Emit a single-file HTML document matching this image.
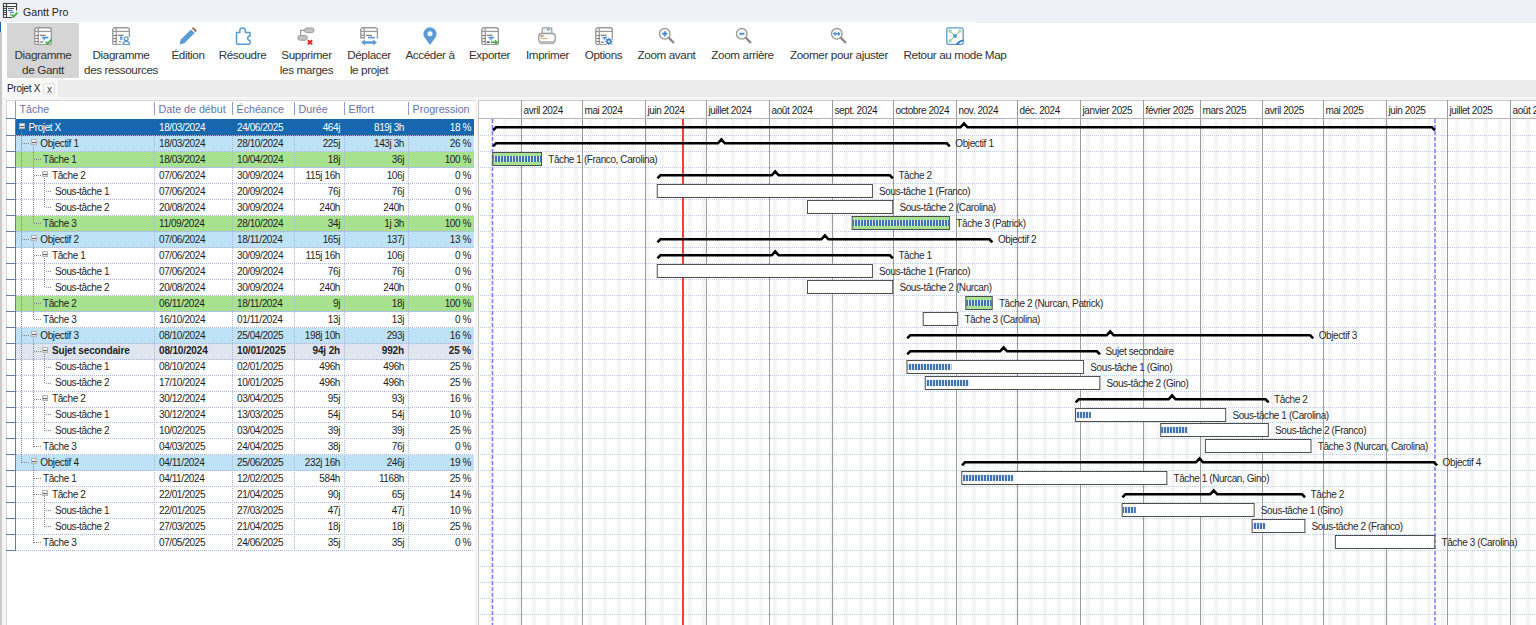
<!DOCTYPE html><html><head><meta charset="utf-8"><style>
*{box-sizing:border-box}
body{margin:0;width:1536px;height:625px;overflow:hidden;position:relative;background:#fff;font-family:"Liberation Sans", sans-serif;color:#1e1e1e}
.a{position:absolute}
.t{position:absolute;white-space:nowrap;font-size:10px;letter-spacing:-0.4px;line-height:16px}
.tb{position:absolute;white-space:nowrap;font-size:11.7px;letter-spacing:-0.38px;line-height:14.8px;text-align:center;color:#333}
.ic{position:absolute;width:18px;height:18px}
</style></head><body>
<div class="a" style="left:0;top:0;width:1536px;height:22px;background:#eff1f6"></div>
<svg class="a" style="left:0;top:0" width="20" height="20" viewBox="0 0 20 20">
<path d="M16.5 10.5 V3.5 H3.5 V17.5 H12" fill="#fff" stroke="#404040" stroke-width="1.1"/>
<rect x="3.5" y="3.5" width="13" height="3" fill="#fff" stroke="#404040" stroke-width="1.1"/>
<line x1="6.5" y1="3.5" x2="6.5" y2="17.5" stroke="#404040" stroke-width="1.1"/>
<path d="M4 8.5 H6.5 M4 10.5 H6.5 M4 12.5 H6.5 M4 14.5 H6.5" stroke="#404040" stroke-width="1"/>
<line x1="8" y1="8.5" x2="14" y2="8.5" stroke="#505050" stroke-width="1.1"/>
<line x1="8" y1="10.5" x2="12.5" y2="10.5" stroke="#3a78c8" stroke-width="1.1"/>
<line x1="10" y1="12.3" x2="14" y2="12.3" stroke="#3a78c8" stroke-width="1.1"/>
<line x1="10.3" y1="12.5" x2="10.3" y2="16" stroke="#909090" stroke-width="0.8"/>
<path d="M11.8 14.3 L13.6 16.6 L17.4 12.6" fill="none" stroke="#45b045" stroke-width="2"/>
</svg>
<div class="a" style="left:23px;top:4.7px;font-size:10.6px;line-height:14px;color:#1e1e1e;white-space:nowrap">Gantt Pro</div>
<div class="a" style="left:0;top:22px;width:1536px;height:58px;background:#fff"></div>
<div class="a" style="left:976px;top:22px;width:560px;height:1px;background:#eff1f6"></div>
<div class="a" style="left:0;top:22px;width:1px;height:10px;background:#1f5fa8"></div>
<div class="a" style="left:7px;top:23px;width:72px;height:55px;background:#d5d5d5"></div>
<svg class="ic" style="left:34px;top:27px" width="18" height="18" viewBox="0 0 18 18"><rect x="0.8" y="0.8" width="16.6" height="17.0" rx="2.2" fill="#fff" stroke="#9a9a9a" stroke-width="1.4"/><line x1="4.3" y1="0.8" x2="4.3" y2="17.8" stroke="#9a9a9a" stroke-width="1.3"/><line x1="0.8" y1="4.4" x2="17.4" y2="4.4" stroke="#9a9a9a" stroke-width="1.3"/><line x1="1.5" y1="8.5" x2="4.3" y2="8.5" stroke="#777" stroke-width="1.1"/><line x1="1.5" y1="11.5" x2="4.3" y2="11.5" stroke="#777" stroke-width="1.1"/><line x1="1.5" y1="14.5" x2="4.3" y2="14.5" stroke="#777" stroke-width="1.1"/><line x1="5.6" y1="8.3" x2="11.6" y2="8.3" stroke="#808080" stroke-width="1.3"/><line x1="8" y1="10.6" x2="14.5" y2="10.6" stroke="#4a90e2" stroke-width="1.7"/><line x1="10.3" y1="10.8" x2="10.3" y2="13.6" stroke="#4a90e2" stroke-width="1.3"/><line x1="5.6" y1="15" x2="9.5" y2="15" stroke="#808080" stroke-width="1.3"/><rect x="12" y="11" width="6" height="7" fill="#fff" opacity="0" /><path d="M11.8 14.6 L13.6 16.8 L17.6 12.3" fill="none" stroke="#3cb043" stroke-width="1.9"/></svg>
<div class="tb" style="left:-17.0px;top:48px;width:120px">Diagramme<br>de Gantt</div>
<svg class="ic" style="left:112px;top:27px" width="18" height="18" viewBox="0 0 18 18"><path d="M17.4 10 V2.8 A2 2 0 0 0 15.4 0.8 H2.8 A2 2 0 0 0 0.8 2.8 V15.8 A2 2 0 0 0 2.8 17.8 H9" fill="#fff" stroke="#9a9a9a" stroke-width="1.4"/><line x1="4.3" y1="0.8" x2="4.3" y2="17.8" stroke="#9a9a9a" stroke-width="1.3"/><line x1="0.8" y1="4.4" x2="17.4" y2="4.4" stroke="#9a9a9a" stroke-width="1.3"/><line x1="1.5" y1="8.5" x2="4.3" y2="8.5" stroke="#777" stroke-width="1.1"/><line x1="1.5" y1="11.5" x2="4.3" y2="11.5" stroke="#777" stroke-width="1.1"/><line x1="1.5" y1="14.5" x2="4.3" y2="14.5" stroke="#777" stroke-width="1.1"/><line x1="5.6" y1="8.3" x2="11.6" y2="8.3" stroke="#808080" stroke-width="1.3"/><path d="M8 10.3 H10.5 M8 12 H10.5" stroke="#4a90e2" stroke-width="1.4"/><line x1="7" y1="14.8" x2="9" y2="14.8" stroke="#808080" stroke-width="1.1"/><circle cx="14.2" cy="11.8" r="1.9" fill="#fff" stroke="#5b9bd5" stroke-width="1.3"/><path d="M10.8 17.6 Q11 14.4 14.2 14.4 Q17.4 14.4 17.6 17.6 Z" fill="#fff" stroke="#5b9bd5" stroke-width="1.3"/></svg>
<div class="tb" style="left:61.0px;top:48px;width:120px">Diagramme<br>des ressources</div>
<svg class="ic" style="left:179px;top:27px" width="18" height="18" viewBox="0 0 18 18"><path d="M0.6 17.4 L1.8 12.6 L12 2.4 L15.6 6 L5.4 16.2 Z" fill="#5b9bd5"/><path d="M12.8 1.6 L14.4 0 L18 3.6 L16.4 5.2 Z" fill="#a27a5a"/></svg>
<div class="tb" style="left:128.0px;top:48px;width:120px">Édition</div>
<svg class="ic" style="left:235px;top:27px" width="18" height="18" viewBox="0 0 18 18"><path d="M1.5 5.5 H4.8 V3.8 A2.8 2.8 0 0 1 10.4 3.8 V5.5 H15 V9 A2.2 2.2 0 0 0 15 13.6 V16.2 A1 1 0 0 1 14 17.2 H2.5 A1 1 0 0 1 1.5 16.2 Z" fill="none" stroke="#5b9bd5" stroke-width="1.5"/></svg>
<div class="tb" style="left:182.5px;top:48px;width:120px">Résoudre</div>
<svg class="ic" style="left:297px;top:27px" width="18" height="18" viewBox="0 0 18 18"><rect x="7.5" y="1" width="9.5" height="4.6" rx="2.3" fill="#c4c4c4" stroke="#9a9a9a" stroke-width="1"/><rect x="0.8" y="8.6" width="9.5" height="4.6" rx="2.3" fill="#c4c4c4" stroke="#9a9a9a" stroke-width="1"/><path d="M7.5 3.3 H3.6 V8.6" fill="none" stroke="#9a9a9a" stroke-width="1.2"/><path d="M10.8 13.2 L15.2 17.4 M15.2 13.2 L10.8 17.4" stroke="#e52525" stroke-width="1.9"/></svg>
<div class="tb" style="left:246.5px;top:48px;width:120px">Supprimer<br>les marges</div>
<svg class="ic" style="left:360px;top:27px" width="18" height="18" viewBox="0 0 18 18"><path d="M0.8 11.8 V2.8 A2 2 0 0 1 2.8 0.8 H15.4 A2 2 0 0 1 17.4 2.8 V11.8" fill="#fff" stroke="#9a9a9a" stroke-width="1.4"/><line x1="4.3" y1="0.8" x2="4.3" y2="11.8" stroke="#9a9a9a" stroke-width="1.3"/><line x1="0.8" y1="4.4" x2="17.4" y2="4.4" stroke="#9a9a9a" stroke-width="1.3"/><line x1="1.5" y1="8.2" x2="4.3" y2="8.2" stroke="#777" stroke-width="1.1"/><line x1="1.5" y1="10.8" x2="4.3" y2="10.8" stroke="#777" stroke-width="1.1"/><line x1="6" y1="8.4" x2="12" y2="8.4" stroke="#808080" stroke-width="1.3"/><line x1="8" y1="10.6" x2="15" y2="10.6" stroke="#5b9bd5" stroke-width="1.6"/><path d="M1.2 15.5 L5 12.6 V14.2 H13.2 V12.6 L17 15.5 L13.2 18.4 V16.8 H5 V18.4 Z" fill="#5b9bd5"/></svg>
<div class="tb" style="left:309.0px;top:48px;width:120px">Déplacer<br>le projet</div>
<svg class="ic" style="left:423px;top:27px" width="18" height="18" viewBox="0 0 18 18"><path d="M7 18 L1.6 10.6 A6.6 6.6 0 1 1 12.4 10.6 Z" fill="#5b9bd5"/><circle cx="7" cy="6.8" r="2.5" fill="#fff"/></svg>
<div class="tb" style="left:370.0px;top:48px;width:120px">Accéder à</div>
<svg class="ic" style="left:481px;top:27px" width="18" height="18" viewBox="0 0 18 18"><rect x="0.8" y="0.8" width="16.6" height="17.0" rx="2.2" fill="#fff" stroke="#9a9a9a" stroke-width="1.4"/><line x1="4.3" y1="0.8" x2="4.3" y2="17.8" stroke="#9a9a9a" stroke-width="1.3"/><line x1="0.8" y1="4.4" x2="17.4" y2="4.4" stroke="#9a9a9a" stroke-width="1.3"/><line x1="1.5" y1="8.5" x2="4.3" y2="8.5" stroke="#777" stroke-width="1.1"/><line x1="1.5" y1="11.5" x2="4.3" y2="11.5" stroke="#777" stroke-width="1.1"/><line x1="1.5" y1="14.5" x2="4.3" y2="14.5" stroke="#777" stroke-width="1.1"/><line x1="5.6" y1="8.3" x2="11.6" y2="8.3" stroke="#808080" stroke-width="1.3"/><line x1="7.5" y1="10.6" x2="13" y2="10.6" stroke="#4a90e2" stroke-width="1.6"/><line x1="10" y1="10.8" x2="10" y2="13.4" stroke="#4a90e2" stroke-width="1.3"/><line x1="5.6" y1="15.2" x2="8.8" y2="15.2" stroke="#555" stroke-width="1.5"/><path d="M10 14.4 H13.8 V12.4 L17.6 15.2 L13.8 18 V16 H10 Z" fill="#3cb043"/></svg>
<div class="tb" style="left:429.5px;top:48px;width:120px">Exporter</div>
<svg class="ic" style="left:538px;top:27px" width="18" height="18" viewBox="0 0 18 18"><rect x="4.2" y="0.8" width="9.6" height="7.5" rx="1.2" fill="#f4f4f4" stroke="#9a9a9a" stroke-width="1.2"/><line x1="9" y1="2.6" x2="11.8" y2="2.6" stroke="#5b9bd5" stroke-width="1.4"/><rect x="0.8" y="6.5" width="16.4" height="8.6" rx="2.4" fill="#fafafa" stroke="#9a9a9a" stroke-width="1.3"/><rect x="1.6" y="14.6" width="14.8" height="2.6" rx="0.8" fill="#b8b8b8"/><line x1="2.6" y1="9" x2="4.2" y2="9" stroke="#e03030" stroke-width="1.4"/><line x1="4.4" y1="9" x2="5.6" y2="9" stroke="#3cb043" stroke-width="1.4"/><line x1="2.6" y1="11.4" x2="9.6" y2="11.4" stroke="#e0a060" stroke-width="0.9"/></svg>
<div class="tb" style="left:487.5px;top:48px;width:120px">Imprimer</div>
<svg class="ic" style="left:595px;top:27px" width="18" height="18" viewBox="0 0 18 18"><rect x="0.8" y="0.8" width="16.6" height="17.0" rx="2.2" fill="#fff" stroke="#9a9a9a" stroke-width="1.4"/><line x1="4.3" y1="0.8" x2="4.3" y2="17.8" stroke="#9a9a9a" stroke-width="1.3"/><line x1="0.8" y1="4.4" x2="17.4" y2="4.4" stroke="#9a9a9a" stroke-width="1.3"/><line x1="1.5" y1="8.5" x2="4.3" y2="8.5" stroke="#777" stroke-width="1.1"/><line x1="1.5" y1="11.5" x2="4.3" y2="11.5" stroke="#777" stroke-width="1.1"/><line x1="1.5" y1="14.5" x2="4.3" y2="14.5" stroke="#777" stroke-width="1.1"/><line x1="5.6" y1="8.3" x2="11.6" y2="8.3" stroke="#808080" stroke-width="1.3"/><line x1="7.5" y1="10.6" x2="12" y2="10.6" stroke="#4a90e2" stroke-width="1.6"/><line x1="9.8" y1="10.8" x2="9.8" y2="13.4" stroke="#4a90e2" stroke-width="1.3"/><line x1="5.6" y1="15.2" x2="8.8" y2="15.2" stroke="#808080" stroke-width="1.3"/><circle cx="13.9" cy="14.5" r="4.2" fill="#fff"/><path d="M16.53 13.91 L17.56 13.98 L17.56 15.02 L16.53 15.09 L16.18 15.95 L16.86 16.73 L16.13 17.46 L15.35 16.78 L14.49 17.13 L14.42 18.16 L13.38 18.16 L13.31 17.13 L12.45 16.78 L11.67 17.46 L10.94 16.73 L11.62 15.95 L11.27 15.09 L10.24 15.02 L10.24 13.98 L11.27 13.91 L11.62 13.05 L10.94 12.27 L11.67 11.54 L12.45 12.22 L13.31 11.87 L13.38 10.84 L14.42 10.84 L14.49 11.87 L15.35 12.22 L16.13 11.54 L16.86 12.27 L16.18 13.05 Z" fill="#3a7fd0"/><circle cx="13.9" cy="14.5" r="1.1" fill="#fff"/></svg>
<div class="tb" style="left:543.5px;top:48px;width:120px">Options</div>
<svg class="ic" style="left:658px;top:27px" width="18" height="18" viewBox="0 0 18 18"><circle cx="6.8" cy="6.8" r="5.3" fill="#fff" stroke="#9a9a9a" stroke-width="1.4"/><line x1="10.6" y1="10.6" x2="16" y2="16" stroke="#8a8a8a" stroke-width="2.4"/><path d="M6.8 4.2 V9.4 M4.2 6.8 H9.4" stroke="#4a90e2" stroke-width="2"/></svg>
<div class="tb" style="left:606.5px;top:48px;width:120px">Zoom avant</div>
<svg class="ic" style="left:735px;top:27px" width="18" height="18" viewBox="0 0 18 18"><circle cx="6.8" cy="6.8" r="5.3" fill="#fff" stroke="#9a9a9a" stroke-width="1.4"/><line x1="10.6" y1="10.6" x2="16" y2="16" stroke="#8a8a8a" stroke-width="2.4"/><path d="M4.2 6.8 H9.4" stroke="#4a90e2" stroke-width="2"/></svg>
<div class="tb" style="left:682.5px;top:48px;width:120px">Zoom arrière</div>
<svg class="ic" style="left:830px;top:27px" width="18" height="18" viewBox="0 0 18 18"><circle cx="6.8" cy="6.8" r="5.3" fill="#fff" stroke="#9a9a9a" stroke-width="1.4"/><line x1="10.6" y1="10.6" x2="16" y2="16" stroke="#8a8a8a" stroke-width="2.4"/><path d="M2.8 6.8 L5.6 4.4 V9.2 Z M10.8 6.8 L8 4.4 V9.2 Z" fill="#4a90e2"/><line x1="5" y1="6.8" x2="8.6" y2="6.8" stroke="#4a90e2" stroke-width="1.6"/></svg>
<div class="tb" style="left:779.0px;top:48px;width:120px">Zoomer pour ajuster</div>
<svg class="ic" style="left:946px;top:27px" width="18" height="18" viewBox="0 0 18 18"><rect x="0.8" y="0.8" width="16.4" height="16.6" rx="1.8" fill="#fff" stroke="#5b9bd5" stroke-width="1.3"/><path d="M4 4 L9 9 L14 4 M4 14 L9 9" stroke="#6cc070" stroke-width="0.9" fill="none"/><circle cx="4" cy="4" r="1.2" fill="#fff" stroke="#6cc070" stroke-width="0.9"/><circle cx="14" cy="4" r="1.2" fill="#fff" stroke="#6cc070" stroke-width="0.9"/><circle cx="4" cy="14" r="1.2" fill="#fff" stroke="#6cc070" stroke-width="0.9"/><circle cx="9" cy="9" r="2" fill="#5b9bd5"/><path d="M9.5 18 Q11.5 13 18 12.4 L18 14 Q14 14.6 12 18 Z" fill="#3a7fd0"/></svg>
<div class="tb" style="left:895.0px;top:48px;width:120px">Retour au mode Map</div>
<div class="a" style="left:1px;top:80px;width:1535px;height:17px;background:#ececec"></div>
<div class="a" style="left:1px;top:97px;width:1535px;height:528px;background:#f5f5f5"></div>
<div class="a" style="left:2px;top:80px;width:56px;height:17px;background:#f7f7f7"></div>
<div class="a" style="left:7px;top:82px;font-size:10px;letter-spacing:-0.3px;line-height:14px;white-space:nowrap;color:#1e1e1e">Projet X</div>
<div class="a" style="left:43px;top:83px;width:12px;height:12px;border:1px solid #e2e2e2;border-radius:2px;background:#f9f9f9"></div>
<div class="a" style="left:47px;top:83px;font-size:10px;line-height:14px;color:#444">x</div>
<div class="a" style="left:0;top:32px;width:1.5px;height:593px;background:#c9c9c9"></div>
<div class="a" style="left:6px;top:100px;width:469px;height:525px;background:#fff;border-top:1px solid #d6d6d6;border-left:1px solid #d6d6d6"></div>
<div class="a" style="left:19.5px;top:102px;font-size:10.7px;line-height:14px;color:#6673a6;white-space:nowrap">Tâche</div>
<div class="a" style="left:154px;top:102px;width:1px;height:13px;background:#8f9cc4"></div>
<div class="a" style="left:158.5px;top:102px;font-size:10.7px;line-height:14px;color:#6673a6;white-space:nowrap">Date de début</div>
<div class="a" style="left:232px;top:102px;width:1px;height:13px;background:#8f9cc4"></div>
<div class="a" style="left:236.5px;top:102px;font-size:10.7px;line-height:14px;color:#6673a6;white-space:nowrap">Échéance</div>
<div class="a" style="left:294px;top:102px;width:1px;height:13px;background:#8f9cc4"></div>
<div class="a" style="left:298.5px;top:102px;font-size:10.7px;line-height:14px;color:#6673a6;white-space:nowrap">Durée</div>
<div class="a" style="left:344px;top:102px;width:1px;height:13px;background:#8f9cc4"></div>
<div class="a" style="left:348.5px;top:102px;font-size:10.7px;line-height:14px;color:#6673a6;white-space:nowrap">Effort</div>
<div class="a" style="left:408px;top:102px;width:1px;height:13px;background:#8f9cc4"></div>
<div class="a" style="left:412.5px;top:102px;font-size:10.7px;line-height:14px;color:#6673a6;white-space:nowrap">Progression</div>
<div class="a" style="left:15px;top:101px;width:1px;height:17px;background:#8f9cc4"></div>
<div class="a" style="left:6px;top:118px;width:10px;height:1px;background:#6a7aa8"></div>
<div class="a" style="left:16px;top:119px;width:458px;height:17px;background:#1667ab"></div>
<div class="a" style="left:16px;top:136px;width:458px;height:16px;background:#bee2f8"></div>
<div class="a" style="left:16px;top:152px;width:458px;height:16px;background:#a9e28f"></div>
<div class="a" style="left:16px;top:216px;width:458px;height:16px;background:#a9e28f"></div>
<div class="a" style="left:16px;top:232px;width:458px;height:16px;background:#bee2f8"></div>
<div class="a" style="left:16px;top:296px;width:458px;height:16px;background:#a9e28f"></div>
<div class="a" style="left:16px;top:328px;width:458px;height:16px;background:#bee2f8"></div>
<div class="a" style="left:16px;top:344px;width:458px;height:16px;background:#dee5ee"></div>
<div class="a" style="left:16px;top:455px;width:458px;height:16px;background:#bee2f8"></div>
<svg class="a" style="left:0;top:0" width="480" height="625"><defs><pattern id="dh" width="2" height="1" patternUnits="userSpaceOnUse"><rect width="1" height="1" fill="#aeb4d6"/></pattern><pattern id="dv" width="1" height="2" patternUnits="userSpaceOnUse"><rect width="1" height="1" fill="#aeb4d6"/></pattern></defs><rect x="16" y="135" width="458" height="1" fill="url(#dh)"/><rect x="6" y="135" width="10" height="1" fill="#6a7aa8"/><rect x="16" y="151" width="458" height="1" fill="url(#dh)"/><rect x="6" y="151" width="10" height="1" fill="#6a7aa8"/><rect x="16" y="167" width="458" height="1" fill="url(#dh)"/><rect x="6" y="167" width="10" height="1" fill="#6a7aa8"/><rect x="16" y="183" width="458" height="1" fill="url(#dh)"/><rect x="6" y="183" width="10" height="1" fill="#6a7aa8"/><rect x="16" y="199" width="458" height="1" fill="url(#dh)"/><rect x="6" y="199" width="10" height="1" fill="#6a7aa8"/><rect x="16" y="215" width="458" height="1" fill="url(#dh)"/><rect x="6" y="215" width="10" height="1" fill="#6a7aa8"/><rect x="16" y="231" width="458" height="1" fill="url(#dh)"/><rect x="6" y="231" width="10" height="1" fill="#6a7aa8"/><rect x="16" y="247" width="458" height="1" fill="url(#dh)"/><rect x="6" y="247" width="10" height="1" fill="#6a7aa8"/><rect x="16" y="263" width="458" height="1" fill="url(#dh)"/><rect x="6" y="263" width="10" height="1" fill="#6a7aa8"/><rect x="16" y="279" width="458" height="1" fill="url(#dh)"/><rect x="6" y="279" width="10" height="1" fill="#6a7aa8"/><rect x="16" y="295" width="458" height="1" fill="url(#dh)"/><rect x="6" y="295" width="10" height="1" fill="#6a7aa8"/><rect x="16" y="311" width="458" height="1" fill="url(#dh)"/><rect x="6" y="311" width="10" height="1" fill="#6a7aa8"/><rect x="16" y="327" width="458" height="1" fill="url(#dh)"/><rect x="6" y="327" width="10" height="1" fill="#6a7aa8"/><rect x="16" y="343" width="458" height="1" fill="url(#dh)"/><rect x="6" y="343" width="10" height="1" fill="#6a7aa8"/><rect x="16" y="359" width="458" height="1" fill="url(#dh)"/><rect x="6" y="359" width="10" height="1" fill="#6a7aa8"/><rect x="16" y="375" width="458" height="1" fill="url(#dh)"/><rect x="6" y="375" width="10" height="1" fill="#6a7aa8"/><rect x="16" y="391" width="458" height="1" fill="url(#dh)"/><rect x="6" y="391" width="10" height="1" fill="#6a7aa8"/><rect x="16" y="407" width="458" height="1" fill="url(#dh)"/><rect x="6" y="407" width="10" height="1" fill="#6a7aa8"/><rect x="16" y="422" width="458" height="1" fill="url(#dh)"/><rect x="6" y="422" width="10" height="1" fill="#6a7aa8"/><rect x="16" y="438" width="458" height="1" fill="url(#dh)"/><rect x="6" y="438" width="10" height="1" fill="#6a7aa8"/><rect x="16" y="454" width="458" height="1" fill="url(#dh)"/><rect x="6" y="454" width="10" height="1" fill="#6a7aa8"/><rect x="16" y="470" width="458" height="1" fill="url(#dh)"/><rect x="6" y="470" width="10" height="1" fill="#6a7aa8"/><rect x="16" y="486" width="458" height="1" fill="url(#dh)"/><rect x="6" y="486" width="10" height="1" fill="#6a7aa8"/><rect x="16" y="502" width="458" height="1" fill="url(#dh)"/><rect x="6" y="502" width="10" height="1" fill="#6a7aa8"/><rect x="16" y="518" width="458" height="1" fill="url(#dh)"/><rect x="6" y="518" width="10" height="1" fill="#6a7aa8"/><rect x="16" y="534" width="458" height="1" fill="url(#dh)"/><rect x="6" y="534" width="10" height="1" fill="#6a7aa8"/><rect x="16" y="550" width="458" height="1" fill="url(#dh)"/><rect x="6" y="550" width="10" height="1" fill="#6a7aa8"/><rect x="154" y="135" width="1" height="416" fill="url(#dv)"/><rect x="232" y="135" width="1" height="416" fill="url(#dv)"/><rect x="294" y="135" width="1" height="416" fill="url(#dv)"/><rect x="344" y="135" width="1" height="416" fill="url(#dv)"/><rect x="408" y="135" width="1" height="416" fill="url(#dv)"/><rect x="15" y="119" width="1" height="432" fill="#6a7aa8"/><defs><pattern id="td" width="2" height="1" patternUnits="userSpaceOnUse"><rect width="1" height="1" fill="#858585"/></pattern><pattern id="tdv" width="1" height="2" patternUnits="userSpaceOnUse"><rect width="1" height="1" fill="#858585"/></pattern></defs><defs><linearGradient id="bxg" x1="0" y1="0" x2="0" y2="1"><stop offset="0" stop-color="#fafafa"/><stop offset="1" stop-color="#d6d6d6"/></linearGradient></defs><rect x="22" y="143" width="8" height="1" fill="url(#td)"/><rect x="34" y="159" width="7" height="1" fill="url(#td)"/><rect x="34" y="175" width="7" height="1" fill="url(#td)"/><rect x="45" y="191" width="7" height="1" fill="url(#td)"/><rect x="45" y="207" width="7" height="1" fill="url(#td)"/><rect x="34" y="223" width="7" height="1" fill="url(#td)"/><rect x="22" y="239" width="8" height="1" fill="url(#td)"/><rect x="34" y="255" width="7" height="1" fill="url(#td)"/><rect x="45" y="271" width="7" height="1" fill="url(#td)"/><rect x="45" y="287" width="7" height="1" fill="url(#td)"/><rect x="34" y="303" width="7" height="1" fill="url(#td)"/><rect x="34" y="319" width="7" height="1" fill="url(#td)"/><rect x="22" y="335" width="8" height="1" fill="url(#td)"/><rect x="34" y="351" width="7" height="1" fill="url(#td)"/><rect x="45" y="367" width="7" height="1" fill="url(#td)"/><rect x="45" y="383" width="7" height="1" fill="url(#td)"/><rect x="34" y="399" width="7" height="1" fill="url(#td)"/><rect x="45" y="414" width="7" height="1" fill="url(#td)"/><rect x="45" y="430" width="7" height="1" fill="url(#td)"/><rect x="34" y="446" width="7" height="1" fill="url(#td)"/><rect x="22" y="462" width="8" height="1" fill="url(#td)"/><rect x="34" y="478" width="7" height="1" fill="url(#td)"/><rect x="34" y="494" width="7" height="1" fill="url(#td)"/><rect x="45" y="510" width="7" height="1" fill="url(#td)"/><rect x="45" y="526" width="7" height="1" fill="url(#td)"/><rect x="34" y="542" width="7" height="1" fill="url(#td)"/><rect x="21" y="129" width="1" height="334" fill="url(#tdv)"/><rect x="33" y="145" width="1" height="79" fill="url(#tdv)"/><rect x="44" y="177" width="1" height="31" fill="url(#tdv)"/><rect x="33" y="241" width="1" height="79" fill="url(#tdv)"/><rect x="44" y="257" width="1" height="31" fill="url(#tdv)"/><rect x="33" y="337" width="1" height="110" fill="url(#tdv)"/><rect x="44" y="353" width="1" height="31" fill="url(#tdv)"/><rect x="44" y="401" width="1" height="30" fill="url(#tdv)"/><rect x="33" y="464" width="1" height="79" fill="url(#tdv)"/><rect x="44" y="496" width="1" height="31" fill="url(#tdv)"/><rect x="19.5" y="123.5" width="5" height="5" fill="url(#bxg)" stroke="#b4b4b4" stroke-width="1"/><rect x="20" y="126" width="4" height="1" fill="#666"/><rect x="31.5" y="139.5" width="5" height="5" fill="url(#bxg)" stroke="#b4b4b4" stroke-width="1"/><rect x="32" y="142" width="4" height="1" fill="#666"/><rect x="42.5" y="171.5" width="5" height="5" fill="url(#bxg)" stroke="#b4b4b4" stroke-width="1"/><rect x="43" y="174" width="4" height="1" fill="#666"/><rect x="31.5" y="235.5" width="5" height="5" fill="url(#bxg)" stroke="#b4b4b4" stroke-width="1"/><rect x="32" y="238" width="4" height="1" fill="#666"/><rect x="42.5" y="251.5" width="5" height="5" fill="url(#bxg)" stroke="#b4b4b4" stroke-width="1"/><rect x="43" y="254" width="4" height="1" fill="#666"/><rect x="31.5" y="331.5" width="5" height="5" fill="url(#bxg)" stroke="#b4b4b4" stroke-width="1"/><rect x="32" y="334" width="4" height="1" fill="#666"/><rect x="42.5" y="347.5" width="5" height="5" fill="url(#bxg)" stroke="#b4b4b4" stroke-width="1"/><rect x="43" y="350" width="4" height="1" fill="#666"/><rect x="42.5" y="395.5" width="5" height="5" fill="url(#bxg)" stroke="#b4b4b4" stroke-width="1"/><rect x="43" y="398" width="4" height="1" fill="#666"/><rect x="31.5" y="458.5" width="5" height="5" fill="url(#bxg)" stroke="#b4b4b4" stroke-width="1"/><rect x="32" y="461" width="4" height="1" fill="#666"/><rect x="42.5" y="490.5" width="5" height="5" fill="url(#bxg)" stroke="#b4b4b4" stroke-width="1"/><rect x="43" y="493" width="4" height="1" fill="#666"/></svg>
<div class="t" style="left:28.5px;top:120.0px;color:#fff;">Projet X</div>
<div class="t" style="left:159px;top:120.0px;color:#fff;">18/03/2024</div>
<div class="t" style="left:237px;top:120.0px;color:#fff;">24/06/2025</div>
<div class="t" style="left:294px;width:46px;text-align:right;top:120.0px;color:#fff;">464j</div>
<div class="t" style="left:344px;width:60px;text-align:right;top:120.0px;color:#fff;">819j 3h</div>
<div class="t" style="left:408px;width:63px;text-align:right;top:120.0px;color:#fff;">18 %</div>
<div class="t" style="left:40.3px;top:136.0px;color:#1e1e1e;">Objectif 1</div>
<div class="t" style="left:159px;top:136.0px;color:#1e1e1e;">18/03/2024</div>
<div class="t" style="left:237px;top:136.0px;color:#1e1e1e;">28/10/2024</div>
<div class="t" style="left:294px;width:46px;text-align:right;top:136.0px;color:#1e1e1e;">225j</div>
<div class="t" style="left:344px;width:60px;text-align:right;top:136.0px;color:#1e1e1e;">143j 3h</div>
<div class="t" style="left:408px;width:63px;text-align:right;top:136.0px;color:#1e1e1e;">26 %</div>
<div class="t" style="left:43.0px;top:151.9px;color:#1e1e1e;">Tâche 1</div>
<div class="t" style="left:159px;top:151.9px;color:#1e1e1e;">18/03/2024</div>
<div class="t" style="left:237px;top:151.9px;color:#1e1e1e;">10/04/2024</div>
<div class="t" style="left:294px;width:46px;text-align:right;top:151.9px;color:#1e1e1e;">18j</div>
<div class="t" style="left:344px;width:60px;text-align:right;top:151.9px;color:#1e1e1e;">36j</div>
<div class="t" style="left:408px;width:63px;text-align:right;top:151.9px;color:#1e1e1e;">100 %</div>
<div class="t" style="left:52.0px;top:167.9px;color:#1e1e1e;">Tâche 2</div>
<div class="t" style="left:159px;top:167.9px;color:#1e1e1e;">07/06/2024</div>
<div class="t" style="left:237px;top:167.9px;color:#1e1e1e;">30/09/2024</div>
<div class="t" style="left:294px;width:46px;text-align:right;top:167.9px;color:#1e1e1e;">115j 16h</div>
<div class="t" style="left:344px;width:60px;text-align:right;top:167.9px;color:#1e1e1e;">106j</div>
<div class="t" style="left:408px;width:63px;text-align:right;top:167.9px;color:#1e1e1e;">0 %</div>
<div class="t" style="left:55.0px;top:183.8px;color:#1e1e1e;">Sous-tâche 1</div>
<div class="t" style="left:159px;top:183.8px;color:#1e1e1e;">07/06/2024</div>
<div class="t" style="left:237px;top:183.8px;color:#1e1e1e;">20/09/2024</div>
<div class="t" style="left:294px;width:46px;text-align:right;top:183.8px;color:#1e1e1e;">76j</div>
<div class="t" style="left:344px;width:60px;text-align:right;top:183.8px;color:#1e1e1e;">76j</div>
<div class="t" style="left:408px;width:63px;text-align:right;top:183.8px;color:#1e1e1e;">0 %</div>
<div class="t" style="left:55.0px;top:199.8px;color:#1e1e1e;">Sous-tâche 2</div>
<div class="t" style="left:159px;top:199.8px;color:#1e1e1e;">20/08/2024</div>
<div class="t" style="left:237px;top:199.8px;color:#1e1e1e;">30/09/2024</div>
<div class="t" style="left:294px;width:46px;text-align:right;top:199.8px;color:#1e1e1e;">240h</div>
<div class="t" style="left:344px;width:60px;text-align:right;top:199.8px;color:#1e1e1e;">240h</div>
<div class="t" style="left:408px;width:63px;text-align:right;top:199.8px;color:#1e1e1e;">0 %</div>
<div class="t" style="left:43.0px;top:215.8px;color:#1e1e1e;">Tâche 3</div>
<div class="t" style="left:159px;top:215.8px;color:#1e1e1e;">11/09/2024</div>
<div class="t" style="left:237px;top:215.8px;color:#1e1e1e;">28/10/2024</div>
<div class="t" style="left:294px;width:46px;text-align:right;top:215.8px;color:#1e1e1e;">34j</div>
<div class="t" style="left:344px;width:60px;text-align:right;top:215.8px;color:#1e1e1e;">1j 3h</div>
<div class="t" style="left:408px;width:63px;text-align:right;top:215.8px;color:#1e1e1e;">100 %</div>
<div class="t" style="left:40.3px;top:231.7px;color:#1e1e1e;">Objectif 2</div>
<div class="t" style="left:159px;top:231.7px;color:#1e1e1e;">07/06/2024</div>
<div class="t" style="left:237px;top:231.7px;color:#1e1e1e;">18/11/2024</div>
<div class="t" style="left:294px;width:46px;text-align:right;top:231.7px;color:#1e1e1e;">165j</div>
<div class="t" style="left:344px;width:60px;text-align:right;top:231.7px;color:#1e1e1e;">137j</div>
<div class="t" style="left:408px;width:63px;text-align:right;top:231.7px;color:#1e1e1e;">13 %</div>
<div class="t" style="left:52.0px;top:247.7px;color:#1e1e1e;">Tâche 1</div>
<div class="t" style="left:159px;top:247.7px;color:#1e1e1e;">07/06/2024</div>
<div class="t" style="left:237px;top:247.7px;color:#1e1e1e;">30/09/2024</div>
<div class="t" style="left:294px;width:46px;text-align:right;top:247.7px;color:#1e1e1e;">115j 16h</div>
<div class="t" style="left:344px;width:60px;text-align:right;top:247.7px;color:#1e1e1e;">106j</div>
<div class="t" style="left:408px;width:63px;text-align:right;top:247.7px;color:#1e1e1e;">0 %</div>
<div class="t" style="left:55.0px;top:263.6px;color:#1e1e1e;">Sous-tâche 1</div>
<div class="t" style="left:159px;top:263.6px;color:#1e1e1e;">07/06/2024</div>
<div class="t" style="left:237px;top:263.6px;color:#1e1e1e;">20/09/2024</div>
<div class="t" style="left:294px;width:46px;text-align:right;top:263.6px;color:#1e1e1e;">76j</div>
<div class="t" style="left:344px;width:60px;text-align:right;top:263.6px;color:#1e1e1e;">76j</div>
<div class="t" style="left:408px;width:63px;text-align:right;top:263.6px;color:#1e1e1e;">0 %</div>
<div class="t" style="left:55.0px;top:279.6px;color:#1e1e1e;">Sous-tâche 2</div>
<div class="t" style="left:159px;top:279.6px;color:#1e1e1e;">20/08/2024</div>
<div class="t" style="left:237px;top:279.6px;color:#1e1e1e;">30/09/2024</div>
<div class="t" style="left:294px;width:46px;text-align:right;top:279.6px;color:#1e1e1e;">240h</div>
<div class="t" style="left:344px;width:60px;text-align:right;top:279.6px;color:#1e1e1e;">240h</div>
<div class="t" style="left:408px;width:63px;text-align:right;top:279.6px;color:#1e1e1e;">0 %</div>
<div class="t" style="left:43.0px;top:295.6px;color:#1e1e1e;">Tâche 2</div>
<div class="t" style="left:159px;top:295.6px;color:#1e1e1e;">06/11/2024</div>
<div class="t" style="left:237px;top:295.6px;color:#1e1e1e;">18/11/2024</div>
<div class="t" style="left:294px;width:46px;text-align:right;top:295.6px;color:#1e1e1e;">9j</div>
<div class="t" style="left:344px;width:60px;text-align:right;top:295.6px;color:#1e1e1e;">18j</div>
<div class="t" style="left:408px;width:63px;text-align:right;top:295.6px;color:#1e1e1e;">100 %</div>
<div class="t" style="left:43.0px;top:311.5px;color:#1e1e1e;">Tâche 3</div>
<div class="t" style="left:159px;top:311.5px;color:#1e1e1e;">16/10/2024</div>
<div class="t" style="left:237px;top:311.5px;color:#1e1e1e;">01/11/2024</div>
<div class="t" style="left:294px;width:46px;text-align:right;top:311.5px;color:#1e1e1e;">13j</div>
<div class="t" style="left:344px;width:60px;text-align:right;top:311.5px;color:#1e1e1e;">13j</div>
<div class="t" style="left:408px;width:63px;text-align:right;top:311.5px;color:#1e1e1e;">0 %</div>
<div class="t" style="left:40.3px;top:327.5px;color:#1e1e1e;">Objectif 3</div>
<div class="t" style="left:159px;top:327.5px;color:#1e1e1e;">08/10/2024</div>
<div class="t" style="left:237px;top:327.5px;color:#1e1e1e;">25/04/2025</div>
<div class="t" style="left:294px;width:46px;text-align:right;top:327.5px;color:#1e1e1e;">198j 10h</div>
<div class="t" style="left:344px;width:60px;text-align:right;top:327.5px;color:#1e1e1e;">293j</div>
<div class="t" style="left:408px;width:63px;text-align:right;top:327.5px;color:#1e1e1e;">16 %</div>
<div class="t" style="left:52.0px;top:343.4px;color:#1e1e1e;font-weight:bold;letter-spacing:-0.15px;">Sujet secondaire</div>
<div class="t" style="left:159px;top:343.4px;color:#1e1e1e;font-weight:bold;letter-spacing:-0.15px;">08/10/2024</div>
<div class="t" style="left:237px;top:343.4px;color:#1e1e1e;font-weight:bold;letter-spacing:-0.15px;">10/01/2025</div>
<div class="t" style="left:294px;width:46px;text-align:right;top:343.4px;color:#1e1e1e;font-weight:bold;letter-spacing:-0.15px;">94j 2h</div>
<div class="t" style="left:344px;width:60px;text-align:right;top:343.4px;color:#1e1e1e;font-weight:bold;letter-spacing:-0.15px;">992h</div>
<div class="t" style="left:408px;width:63px;text-align:right;top:343.4px;color:#1e1e1e;font-weight:bold;letter-spacing:-0.15px;">25 %</div>
<div class="t" style="left:55.0px;top:359.4px;color:#1e1e1e;">Sous-tâche 1</div>
<div class="t" style="left:159px;top:359.4px;color:#1e1e1e;">08/10/2024</div>
<div class="t" style="left:237px;top:359.4px;color:#1e1e1e;">02/01/2025</div>
<div class="t" style="left:294px;width:46px;text-align:right;top:359.4px;color:#1e1e1e;">496h</div>
<div class="t" style="left:344px;width:60px;text-align:right;top:359.4px;color:#1e1e1e;">496h</div>
<div class="t" style="left:408px;width:63px;text-align:right;top:359.4px;color:#1e1e1e;">25 %</div>
<div class="t" style="left:55.0px;top:375.4px;color:#1e1e1e;">Sous-tâche 2</div>
<div class="t" style="left:159px;top:375.4px;color:#1e1e1e;">17/10/2024</div>
<div class="t" style="left:237px;top:375.4px;color:#1e1e1e;">10/01/2025</div>
<div class="t" style="left:294px;width:46px;text-align:right;top:375.4px;color:#1e1e1e;">496h</div>
<div class="t" style="left:344px;width:60px;text-align:right;top:375.4px;color:#1e1e1e;">496h</div>
<div class="t" style="left:408px;width:63px;text-align:right;top:375.4px;color:#1e1e1e;">25 %</div>
<div class="t" style="left:52.0px;top:391.3px;color:#1e1e1e;">Tâche 2</div>
<div class="t" style="left:159px;top:391.3px;color:#1e1e1e;">30/12/2024</div>
<div class="t" style="left:237px;top:391.3px;color:#1e1e1e;">03/04/2025</div>
<div class="t" style="left:294px;width:46px;text-align:right;top:391.3px;color:#1e1e1e;">95j</div>
<div class="t" style="left:344px;width:60px;text-align:right;top:391.3px;color:#1e1e1e;">93j</div>
<div class="t" style="left:408px;width:63px;text-align:right;top:391.3px;color:#1e1e1e;">16 %</div>
<div class="t" style="left:55.0px;top:407.3px;color:#1e1e1e;">Sous-tâche 1</div>
<div class="t" style="left:159px;top:407.3px;color:#1e1e1e;">30/12/2024</div>
<div class="t" style="left:237px;top:407.3px;color:#1e1e1e;">13/03/2025</div>
<div class="t" style="left:294px;width:46px;text-align:right;top:407.3px;color:#1e1e1e;">54j</div>
<div class="t" style="left:344px;width:60px;text-align:right;top:407.3px;color:#1e1e1e;">54j</div>
<div class="t" style="left:408px;width:63px;text-align:right;top:407.3px;color:#1e1e1e;">10 %</div>
<div class="t" style="left:55.0px;top:423.2px;color:#1e1e1e;">Sous-tâche 2</div>
<div class="t" style="left:159px;top:423.2px;color:#1e1e1e;">10/02/2025</div>
<div class="t" style="left:237px;top:423.2px;color:#1e1e1e;">03/04/2025</div>
<div class="t" style="left:294px;width:46px;text-align:right;top:423.2px;color:#1e1e1e;">39j</div>
<div class="t" style="left:344px;width:60px;text-align:right;top:423.2px;color:#1e1e1e;">39j</div>
<div class="t" style="left:408px;width:63px;text-align:right;top:423.2px;color:#1e1e1e;">25 %</div>
<div class="t" style="left:43.0px;top:439.2px;color:#1e1e1e;">Tâche 3</div>
<div class="t" style="left:159px;top:439.2px;color:#1e1e1e;">04/03/2025</div>
<div class="t" style="left:237px;top:439.2px;color:#1e1e1e;">24/04/2025</div>
<div class="t" style="left:294px;width:46px;text-align:right;top:439.2px;color:#1e1e1e;">38j</div>
<div class="t" style="left:344px;width:60px;text-align:right;top:439.2px;color:#1e1e1e;">76j</div>
<div class="t" style="left:408px;width:63px;text-align:right;top:439.2px;color:#1e1e1e;">0 %</div>
<div class="t" style="left:40.3px;top:455.2px;color:#1e1e1e;">Objectif 4</div>
<div class="t" style="left:159px;top:455.2px;color:#1e1e1e;">04/11/2024</div>
<div class="t" style="left:237px;top:455.2px;color:#1e1e1e;">25/06/2025</div>
<div class="t" style="left:294px;width:46px;text-align:right;top:455.2px;color:#1e1e1e;">232j 16h</div>
<div class="t" style="left:344px;width:60px;text-align:right;top:455.2px;color:#1e1e1e;">246j</div>
<div class="t" style="left:408px;width:63px;text-align:right;top:455.2px;color:#1e1e1e;">19 %</div>
<div class="t" style="left:43.0px;top:471.1px;color:#1e1e1e;">Tâche 1</div>
<div class="t" style="left:159px;top:471.1px;color:#1e1e1e;">04/11/2024</div>
<div class="t" style="left:237px;top:471.1px;color:#1e1e1e;">12/02/2025</div>
<div class="t" style="left:294px;width:46px;text-align:right;top:471.1px;color:#1e1e1e;">584h</div>
<div class="t" style="left:344px;width:60px;text-align:right;top:471.1px;color:#1e1e1e;">1168h</div>
<div class="t" style="left:408px;width:63px;text-align:right;top:471.1px;color:#1e1e1e;">25 %</div>
<div class="t" style="left:52.0px;top:487.1px;color:#1e1e1e;">Tâche 2</div>
<div class="t" style="left:159px;top:487.1px;color:#1e1e1e;">22/01/2025</div>
<div class="t" style="left:237px;top:487.1px;color:#1e1e1e;">21/04/2025</div>
<div class="t" style="left:294px;width:46px;text-align:right;top:487.1px;color:#1e1e1e;">90j</div>
<div class="t" style="left:344px;width:60px;text-align:right;top:487.1px;color:#1e1e1e;">65j</div>
<div class="t" style="left:408px;width:63px;text-align:right;top:487.1px;color:#1e1e1e;">14 %</div>
<div class="t" style="left:55.0px;top:503.0px;color:#1e1e1e;">Sous-tâche 1</div>
<div class="t" style="left:159px;top:503.0px;color:#1e1e1e;">22/01/2025</div>
<div class="t" style="left:237px;top:503.0px;color:#1e1e1e;">27/03/2025</div>
<div class="t" style="left:294px;width:46px;text-align:right;top:503.0px;color:#1e1e1e;">47j</div>
<div class="t" style="left:344px;width:60px;text-align:right;top:503.0px;color:#1e1e1e;">47j</div>
<div class="t" style="left:408px;width:63px;text-align:right;top:503.0px;color:#1e1e1e;">10 %</div>
<div class="t" style="left:55.0px;top:519.0px;color:#1e1e1e;">Sous-tâche 2</div>
<div class="t" style="left:159px;top:519.0px;color:#1e1e1e;">27/03/2025</div>
<div class="t" style="left:237px;top:519.0px;color:#1e1e1e;">21/04/2025</div>
<div class="t" style="left:294px;width:46px;text-align:right;top:519.0px;color:#1e1e1e;">18j</div>
<div class="t" style="left:344px;width:60px;text-align:right;top:519.0px;color:#1e1e1e;">18j</div>
<div class="t" style="left:408px;width:63px;text-align:right;top:519.0px;color:#1e1e1e;">25 %</div>
<div class="t" style="left:43.0px;top:535.0px;color:#1e1e1e;">Tâche 3</div>
<div class="t" style="left:159px;top:535.0px;color:#1e1e1e;">07/05/2025</div>
<div class="t" style="left:237px;top:535.0px;color:#1e1e1e;">24/06/2025</div>
<div class="t" style="left:294px;width:46px;text-align:right;top:535.0px;color:#1e1e1e;">35j</div>
<div class="t" style="left:344px;width:60px;text-align:right;top:535.0px;color:#1e1e1e;">35j</div>
<div class="t" style="left:408px;width:63px;text-align:right;top:535.0px;color:#1e1e1e;">0 %</div>
<div class="a" style="left:478px;top:100px;width:1058px;height:525px;background:#fff;border-top:1px solid #c8c8c8;border-left:1px solid #c8c8c8"></div>
<svg class="a" style="left:0;top:0" width="1536" height="625" shape-rendering="crispEdges"><rect x="488.9" y="119" width="4" height="506" fill="#f5f5f5"/><rect x="503.2" y="119" width="4" height="506" fill="#f5f5f5"/><rect x="517.4" y="119" width="4" height="506" fill="#f5f5f5"/><rect x="531.6" y="119" width="4" height="506" fill="#f5f5f5"/><rect x="545.8" y="119" width="4" height="506" fill="#f5f5f5"/><rect x="560.0" y="119" width="4" height="506" fill="#f5f5f5"/><rect x="574.2" y="119" width="4" height="506" fill="#f5f5f5"/><rect x="588.4" y="119" width="4" height="506" fill="#f5f5f5"/><rect x="602.6" y="119" width="4" height="506" fill="#f5f5f5"/><rect x="616.9" y="119" width="4" height="506" fill="#f5f5f5"/><rect x="631.1" y="119" width="4" height="506" fill="#f5f5f5"/><rect x="645.3" y="119" width="4" height="506" fill="#f5f5f5"/><rect x="659.5" y="119" width="4" height="506" fill="#f5f5f5"/><rect x="673.7" y="119" width="4" height="506" fill="#f5f5f5"/><rect x="687.9" y="119" width="4" height="506" fill="#f5f5f5"/><rect x="702.1" y="119" width="4" height="506" fill="#f5f5f5"/><rect x="716.3" y="119" width="4" height="506" fill="#f5f5f5"/><rect x="730.6" y="119" width="4" height="506" fill="#f5f5f5"/><rect x="744.8" y="119" width="4" height="506" fill="#f5f5f5"/><rect x="759.0" y="119" width="4" height="506" fill="#f5f5f5"/><rect x="773.2" y="119" width="4" height="506" fill="#f5f5f5"/><rect x="787.4" y="119" width="4" height="506" fill="#f5f5f5"/><rect x="801.6" y="119" width="4" height="506" fill="#f5f5f5"/><rect x="815.8" y="119" width="4" height="506" fill="#f5f5f5"/><rect x="830.0" y="119" width="4" height="506" fill="#f5f5f5"/><rect x="844.2" y="119" width="4" height="506" fill="#f5f5f5"/><rect x="858.5" y="119" width="4" height="506" fill="#f5f5f5"/><rect x="872.7" y="119" width="4" height="506" fill="#f5f5f5"/><rect x="886.9" y="119" width="4" height="506" fill="#f5f5f5"/><rect x="901.1" y="119" width="4" height="506" fill="#f5f5f5"/><rect x="915.3" y="119" width="4" height="506" fill="#f5f5f5"/><rect x="929.5" y="119" width="4" height="506" fill="#f5f5f5"/><rect x="943.7" y="119" width="4" height="506" fill="#f5f5f5"/><rect x="957.9" y="119" width="4" height="506" fill="#f5f5f5"/><rect x="972.2" y="119" width="4" height="506" fill="#f5f5f5"/><rect x="986.4" y="119" width="4" height="506" fill="#f5f5f5"/><rect x="1000.6" y="119" width="4" height="506" fill="#f5f5f5"/><rect x="1014.8" y="119" width="4" height="506" fill="#f5f5f5"/><rect x="1029.0" y="119" width="4" height="506" fill="#f5f5f5"/><rect x="1043.2" y="119" width="4" height="506" fill="#f5f5f5"/><rect x="1057.4" y="119" width="4" height="506" fill="#f5f5f5"/><rect x="1071.6" y="119" width="4" height="506" fill="#f5f5f5"/><rect x="1085.9" y="119" width="4" height="506" fill="#f5f5f5"/><rect x="1100.1" y="119" width="4" height="506" fill="#f5f5f5"/><rect x="1114.3" y="119" width="4" height="506" fill="#f5f5f5"/><rect x="1128.5" y="119" width="4" height="506" fill="#f5f5f5"/><rect x="1142.7" y="119" width="4" height="506" fill="#f5f5f5"/><rect x="1156.9" y="119" width="4" height="506" fill="#f5f5f5"/><rect x="1171.1" y="119" width="4" height="506" fill="#f5f5f5"/><rect x="1185.3" y="119" width="4" height="506" fill="#f5f5f5"/><rect x="1199.6" y="119" width="4" height="506" fill="#f5f5f5"/><rect x="1213.8" y="119" width="4" height="506" fill="#f5f5f5"/><rect x="1228.0" y="119" width="4" height="506" fill="#f5f5f5"/><rect x="1242.2" y="119" width="4" height="506" fill="#f5f5f5"/><rect x="1256.4" y="119" width="4" height="506" fill="#f5f5f5"/><rect x="1270.6" y="119" width="4" height="506" fill="#f5f5f5"/><rect x="1284.8" y="119" width="4" height="506" fill="#f5f5f5"/><rect x="1299.0" y="119" width="4" height="506" fill="#f5f5f5"/><rect x="1313.2" y="119" width="4" height="506" fill="#f5f5f5"/><rect x="1327.5" y="119" width="4" height="506" fill="#f5f5f5"/><rect x="1341.7" y="119" width="4" height="506" fill="#f5f5f5"/><rect x="1355.9" y="119" width="4" height="506" fill="#f5f5f5"/><rect x="1370.1" y="119" width="4" height="506" fill="#f5f5f5"/><rect x="1384.3" y="119" width="4" height="506" fill="#f5f5f5"/><rect x="1398.5" y="119" width="4" height="506" fill="#f5f5f5"/><rect x="1412.7" y="119" width="4" height="506" fill="#f5f5f5"/><rect x="1426.9" y="119" width="4" height="506" fill="#f5f5f5"/><rect x="1441.2" y="119" width="4" height="506" fill="#f5f5f5"/><rect x="1455.4" y="119" width="4" height="506" fill="#f5f5f5"/><rect x="1469.6" y="119" width="4" height="506" fill="#f5f5f5"/><rect x="1483.8" y="119" width="4" height="506" fill="#f5f5f5"/><rect x="1498.0" y="119" width="4" height="506" fill="#f5f5f5"/><rect x="1512.2" y="119" width="4" height="506" fill="#f5f5f5"/><rect x="1526.4" y="119" width="4" height="506" fill="#f5f5f5"/><defs><pattern id="ch" width="2" height="1" patternUnits="userSpaceOnUse"><rect width="1" height="1" fill="#bccae4"/></pattern></defs><rect x="479" y="135" width="1058" height="1" fill="url(#ch)"/><rect x="479" y="151" width="1058" height="1" fill="url(#ch)"/><rect x="479" y="167" width="1058" height="1" fill="url(#ch)"/><rect x="479" y="183" width="1058" height="1" fill="url(#ch)"/><rect x="479" y="199" width="1058" height="1" fill="url(#ch)"/><rect x="479" y="215" width="1058" height="1" fill="url(#ch)"/><rect x="479" y="231" width="1058" height="1" fill="url(#ch)"/><rect x="479" y="247" width="1058" height="1" fill="url(#ch)"/><rect x="479" y="263" width="1058" height="1" fill="url(#ch)"/><rect x="479" y="279" width="1058" height="1" fill="url(#ch)"/><rect x="479" y="295" width="1058" height="1" fill="url(#ch)"/><rect x="479" y="311" width="1058" height="1" fill="url(#ch)"/><rect x="479" y="327" width="1058" height="1" fill="url(#ch)"/><rect x="479" y="343" width="1058" height="1" fill="url(#ch)"/><rect x="479" y="359" width="1058" height="1" fill="url(#ch)"/><rect x="479" y="375" width="1058" height="1" fill="url(#ch)"/><rect x="479" y="391" width="1058" height="1" fill="url(#ch)"/><rect x="479" y="407" width="1058" height="1" fill="url(#ch)"/><rect x="479" y="422" width="1058" height="1" fill="url(#ch)"/><rect x="479" y="438" width="1058" height="1" fill="url(#ch)"/><rect x="479" y="454" width="1058" height="1" fill="url(#ch)"/><rect x="479" y="470" width="1058" height="1" fill="url(#ch)"/><rect x="479" y="486" width="1058" height="1" fill="url(#ch)"/><rect x="479" y="502" width="1058" height="1" fill="url(#ch)"/><rect x="479" y="518" width="1058" height="1" fill="url(#ch)"/><rect x="479" y="534" width="1058" height="1" fill="url(#ch)"/><rect x="479" y="550" width="1058" height="1" fill="url(#ch)"/><rect x="479" y="566" width="1058" height="1" fill="url(#ch)"/><rect x="479" y="582" width="1058" height="1" fill="url(#ch)"/><rect x="479" y="598" width="1058" height="1" fill="url(#ch)"/><rect x="479" y="614" width="1058" height="1" fill="url(#ch)"/><rect x="521" y="100" width="1" height="525" fill="#9c9c9c"/><rect x="582" y="100" width="1" height="525" fill="#9c9c9c"/><rect x="645" y="100" width="1" height="525" fill="#9c9c9c"/><rect x="706" y="100" width="1" height="525" fill="#9c9c9c"/><rect x="769" y="100" width="1" height="525" fill="#9c9c9c"/><rect x="832" y="100" width="1" height="525" fill="#9c9c9c"/><rect x="893" y="100" width="1" height="525" fill="#9c9c9c"/><rect x="956" y="100" width="1" height="525" fill="#9c9c9c"/><rect x="1017" y="100" width="1" height="525" fill="#9c9c9c"/><rect x="1080" y="100" width="1" height="525" fill="#9c9c9c"/><rect x="1143" y="100" width="1" height="525" fill="#9c9c9c"/><rect x="1200" y="100" width="1" height="525" fill="#9c9c9c"/><rect x="1262" y="100" width="1" height="525" fill="#9c9c9c"/><rect x="1323" y="100" width="1" height="525" fill="#9c9c9c"/><rect x="1386" y="100" width="1" height="525" fill="#9c9c9c"/><rect x="1447" y="100" width="1" height="525" fill="#9c9c9c"/><rect x="1510" y="100" width="1" height="525" fill="#9c9c9c"/><rect x="478" y="118" width="1058" height="1" fill="#b4b4b4"/></svg>
<div class="t" style="left:523.5px;top:102.5px;color:#1e1e1e">avril 2024</div>
<div class="t" style="left:584.5px;top:102.5px;color:#1e1e1e">mai 2024</div>
<div class="t" style="left:647.5px;top:102.5px;color:#1e1e1e">juin 2024</div>
<div class="t" style="left:708.5px;top:102.5px;color:#1e1e1e">juillet 2024</div>
<div class="t" style="left:771.5px;top:102.5px;color:#1e1e1e">août 2024</div>
<div class="t" style="left:834.5px;top:102.5px;color:#1e1e1e">sept. 2024</div>
<div class="t" style="left:895.5px;top:102.5px;color:#1e1e1e">octobre 2024</div>
<div class="t" style="left:958.5px;top:102.5px;color:#1e1e1e">nov. 2024</div>
<div class="t" style="left:1019.5px;top:102.5px;color:#1e1e1e">déc. 2024</div>
<div class="t" style="left:1082.5px;top:102.5px;color:#1e1e1e">janvier 2025</div>
<div class="t" style="left:1145.5px;top:102.5px;color:#1e1e1e">février 2025</div>
<div class="t" style="left:1202.5px;top:102.5px;color:#1e1e1e">mars 2025</div>
<div class="t" style="left:1264.5px;top:102.5px;color:#1e1e1e">avril 2025</div>
<div class="t" style="left:1325.5px;top:102.5px;color:#1e1e1e">mai 2025</div>
<div class="t" style="left:1388.5px;top:102.5px;color:#1e1e1e">juin 2025</div>
<div class="t" style="left:1449.5px;top:102.5px;color:#1e1e1e">juillet 2025</div>
<div class="t" style="left:1512.5px;top:102.5px;color:#1e1e1e">août 2025</div>
<svg class="a" style="left:0;top:0" width="1536" height="625"><defs><pattern id="prog" width="3" height="625" patternUnits="userSpaceOnUse"><rect width="3" height="625" fill="#dce7f6"/><rect width="2" height="625" fill="#3f72b8"/></pattern></defs><line x1="492.5" y1="119" x2="492.5" y2="625" stroke="#7b7bff" stroke-width="1.5" stroke-dasharray="4 2"/><line x1="1435.0" y1="119" x2="1435.0" y2="625" stroke="#7b7bff" stroke-width="1.5" stroke-dasharray="4 2"/><rect x="682" y="119" width="2" height="506" fill="#ff3838"/><path d="M493.0 130.3 L496.0 127.3 L960.5 127.3 L964.0 123.5 L967.5 127.3 L1432.0 127.3 L1435.0 130.3" fill="none" stroke="#000" stroke-width="2.6" stroke-linejoin="miter"/><path d="M493.0 146.3 L496.0 143.3 L717.9 143.3 L721.4 139.5 L724.9 143.3 L946.8 143.3 L949.8 146.3" fill="none" stroke="#000" stroke-width="2.6" stroke-linejoin="miter"/><rect x="492.78" y="152.5" width="48.73" height="13" fill="#a9e28f" stroke="#4e4e4e" stroke-width="1"/><rect x="493.3" y="156" width="47.7" height="6" fill="url(#prog)"/><path d="M657.4 178.3 L660.4 175.3 L771.7 175.3 L775.2 171.5 L778.7 175.3 L889.9 175.3 L892.9 178.3" fill="none" stroke="#000" stroke-width="2.6" stroke-linejoin="miter"/><rect x="657.23" y="184.5" width="215.21" height="13" fill="#fff" stroke="#4e4e4e" stroke-width="1"/><rect x="807.47" y="200.5" width="85.27" height="13" fill="#fff" stroke="#4e4e4e" stroke-width="1"/><rect x="852.14" y="216.5" width="97.45" height="13" fill="#a9e28f" stroke="#4e4e4e" stroke-width="1"/><rect x="852.6" y="220" width="96.5" height="6" fill="url(#prog)"/><path d="M657.4 242.3 L660.4 239.3 L821.4 239.3 L824.9 235.5 L828.4 239.3 L989.4 239.3 L992.4 242.3" fill="none" stroke="#000" stroke-width="2.6" stroke-linejoin="miter"/><path d="M657.4 258.3 L660.4 255.3 L771.7 255.3 L775.2 251.5 L778.7 255.3 L889.9 255.3 L892.9 258.3" fill="none" stroke="#000" stroke-width="2.6" stroke-linejoin="miter"/><rect x="657.23" y="264.5" width="215.21" height="13" fill="#fff" stroke="#4e4e4e" stroke-width="1"/><rect x="807.47" y="280.5" width="85.27" height="13" fill="#fff" stroke="#4e4e4e" stroke-width="1"/><rect x="965.84" y="296.5" width="26.39" height="13" fill="#a9e28f" stroke="#4e4e4e" stroke-width="1"/><rect x="966.3" y="300" width="25.4" height="6" fill="url(#prog)"/><rect x="923.20" y="312.5" width="34.52" height="13" fill="#fff" stroke="#4e4e4e" stroke-width="1"/><path d="M907.2 338.3 L910.2 335.3 L1106.7 335.3 L1110.2 331.5 L1113.7 335.3 L1310.2 335.3 L1313.2 338.3" fill="none" stroke="#000" stroke-width="2.6" stroke-linejoin="miter"/><path d="M907.2 354.3 L910.2 351.3 L1000.1 351.3 L1003.6 347.5 L1007.1 351.3 L1097.0 351.3 L1100.0 354.3" fill="none" stroke="#000" stroke-width="2.6" stroke-linejoin="miter"/><rect x="906.96" y="360.5" width="176.64" height="13" fill="#fff" stroke="#4e4e4e" stroke-width="1"/><rect x="907.5" y="364" width="43.9" height="6" fill="url(#prog)"/><rect x="925.23" y="376.5" width="174.61" height="13" fill="#fff" stroke="#4e4e4e" stroke-width="1"/><rect x="925.7" y="380" width="43.4" height="6" fill="url(#prog)"/><path d="M1075.7 402.3 L1078.7 399.3 L1168.6 399.3 L1172.1 395.5 L1175.6 399.3 L1265.6 399.3 L1268.6 402.3" fill="none" stroke="#000" stroke-width="2.6" stroke-linejoin="miter"/><rect x="1075.47" y="408.5" width="150.24" height="13" fill="#fff" stroke="#4e4e4e" stroke-width="1"/><rect x="1076.0" y="412" width="14.9" height="6" fill="url(#prog)"/><rect x="1160.74" y="423.5" width="107.61" height="13" fill="#fff" stroke="#4e4e4e" stroke-width="1"/><rect x="1161.2" y="427" width="26.7" height="6" fill="url(#prog)"/><rect x="1205.41" y="439.5" width="105.58" height="13" fill="#fff" stroke="#4e4e4e" stroke-width="1"/><path d="M962.0 465.3 L965.0 462.3 L1196.0 462.3 L1199.5 458.5 L1203.0 462.3 L1434.1 462.3 L1437.1 465.3" fill="none" stroke="#000" stroke-width="2.6" stroke-linejoin="miter"/><rect x="961.78" y="471.5" width="205.06" height="13" fill="#fff" stroke="#4e4e4e" stroke-width="1"/><rect x="962.3" y="475" width="51.0" height="6" fill="url(#prog)"/><path d="M1122.4 497.3 L1125.4 494.3 L1210.2 494.3 L1213.7 490.5 L1217.2 494.3 L1302.1 494.3 L1305.1 497.3" fill="none" stroke="#000" stroke-width="2.6" stroke-linejoin="miter"/><rect x="1122.17" y="503.5" width="131.97" height="13" fill="#fff" stroke="#4e4e4e" stroke-width="1"/><rect x="1122.7" y="507" width="13.1" height="6" fill="url(#prog)"/><rect x="1252.11" y="519.5" width="52.79" height="13" fill="#fff" stroke="#4e4e4e" stroke-width="1"/><rect x="1252.6" y="523" width="12.9" height="6" fill="url(#prog)"/><rect x="1335.35" y="535.5" width="99.48" height="13" fill="#fff" stroke="#4e4e4e" stroke-width="1"/></svg>
<div class="t" style="left:955.3px;top:136.2px;color:#2a2a2a">Objectif 1</div>
<div class="t" style="left:548.2px;top:152.1px;color:#2a2a2a">Tâche 1 (Franco, Carolina)</div>
<div class="t" style="left:898.4px;top:168.1px;color:#2a2a2a">Tâche 2</div>
<div class="t" style="left:879.1px;top:184.0px;color:#2a2a2a">Sous-tâche 1 (Franco)</div>
<div class="t" style="left:899.4px;top:200.0px;color:#2a2a2a">Sous-tâche 2 (Carolina)</div>
<div class="t" style="left:956.3px;top:216.0px;color:#2a2a2a">Tâche 3 (Patrick)</div>
<div class="t" style="left:997.9px;top:231.9px;color:#2a2a2a">Objectif 2</div>
<div class="t" style="left:898.4px;top:247.9px;color:#2a2a2a">Tâche 1</div>
<div class="t" style="left:879.1px;top:263.8px;color:#2a2a2a">Sous-tâche 1 (Franco)</div>
<div class="t" style="left:899.4px;top:279.8px;color:#2a2a2a">Sous-tâche 2 (Nurcan)</div>
<div class="t" style="left:998.9px;top:295.8px;color:#2a2a2a">Tâche 2 (Nurcan, Patrick)</div>
<div class="t" style="left:964.4px;top:311.7px;color:#2a2a2a">Tâche 3 (Carolina)</div>
<div class="t" style="left:1318.7px;top:327.7px;color:#2a2a2a">Objectif 3</div>
<div class="t" style="left:1105.5px;top:343.6px;color:#2a2a2a">Sujet secondaire</div>
<div class="t" style="left:1090.3px;top:359.6px;color:#2a2a2a">Sous-tâche 1 (Gino)</div>
<div class="t" style="left:1106.5px;top:375.6px;color:#2a2a2a">Sous-tâche 2 (Gino)</div>
<div class="t" style="left:1274.1px;top:391.5px;color:#2a2a2a">Tâche 2</div>
<div class="t" style="left:1232.4px;top:407.5px;color:#2a2a2a">Sous-tâche 1 (Carolina)</div>
<div class="t" style="left:1275.1px;top:423.4px;color:#2a2a2a">Sous-tâche 2 (Franco)</div>
<div class="t" style="left:1317.7px;top:439.4px;color:#2a2a2a">Tâche 3 (Nurcan, Carolina)</div>
<div class="t" style="left:1442.6px;top:455.4px;color:#2a2a2a">Objectif 4</div>
<div class="t" style="left:1173.5px;top:471.3px;color:#2a2a2a">Tâche 1 (Nurcan, Gino)</div>
<div class="t" style="left:1310.6px;top:487.3px;color:#2a2a2a">Tâche 2</div>
<div class="t" style="left:1260.8px;top:503.2px;color:#2a2a2a">Sous-tâche 1 (Gino)</div>
<div class="t" style="left:1311.6px;top:519.2px;color:#2a2a2a">Sous-tâche 2 (Franco)</div>
<div class="t" style="left:1441.5px;top:535.2px;color:#2a2a2a">Tâche 3 (Carolina)</div>
</body></html>
